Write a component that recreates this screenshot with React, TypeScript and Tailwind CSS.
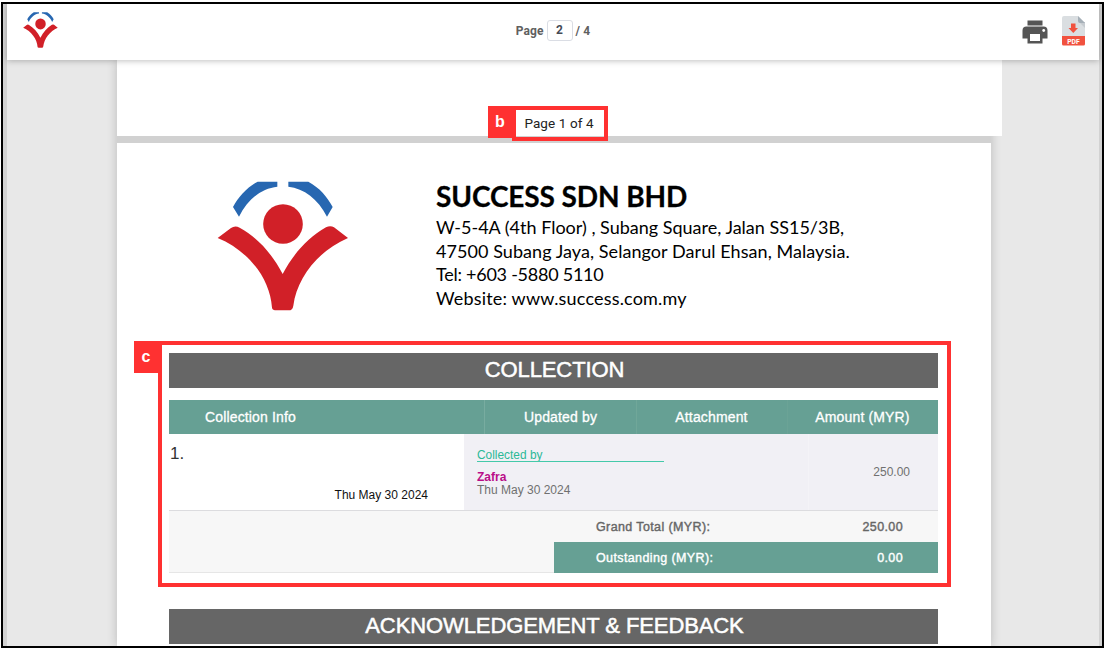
import React from "react";

function Logo({ className }: { className: string }) {
  return (
    <svg className={className} viewBox="51 48 396 390" preserveAspectRatio="none" aria-hidden="true">
      <path
        fill="#2767b1"
        d="M173 50H232V65C185 70 143 102 117 155L99 126C115 97 140 68 173 50ZM265 50H325C359 68 383 97 398 126L381 155C354 102 312 70 265 65Z"
      />
      <circle cx="249" cy="177" r="59.5" fill="#d12028" />
      <path
        fill="#d12028"
        d="M53 219L93 189Q105 180 119 188C173 218 216 266 248 327C280 266 324 218 378 187Q391 180 402 187L444 219C354 257 291 339 280 422Q278 436 266 436H230Q217 436 216 428C210 340 145 257 53 219Z"
      />
    </svg>
  );
}

function PrintIcon() {
  return (
    <svg className="h-6 w-[26px]" viewBox="0 0 26 24" aria-hidden="true">
      <path fill="#555" d="M5.5 0.5h15v5h-15zM4.5 6.5h17Q25.5 6.500 25.500 10.500V18.500H20.500V23.500H5.500V18.500H.5V10.500Q.5 6.500 4.500 6.500Z" />
      <path fill="#fff" d="M8 14h10v7H8z" />
      <circle cx="21.700" cy="10.500" r="1.400" fill="#fff" />
    </svg>
  );
}

function PdfIcon() {
  return (
    <svg className="h-[30px] w-[23px]" viewBox="0 0 23 30" aria-hidden="true">
      <path fill="#dadee1" d="M2 0h14l7 7v14H0V2Q0 0 2 0Z" />
      <path fill="#c6cbd0" d="M17 6h6v6z" />
      <path fill="#a5afb7" d="M16 0l7 7h-5q-2 0-2-2z" />
      <path fill="#f1523f" d="M9 7.500h4.500v4.500h2.500L11.300 17 6.500 12H9zM0 20h23v8q0 1.500-1.500 1.500h-20Q0 29.500 0 28z" />
      <text x="11.500" y="27.500" textAnchor="middle" fill="#fff" fontSize="7.500" fontWeight="700" fontFamily="Roboto, sans-serif" textLength="12.500" lengthAdjust="spacingAndGlyphs">
        PDF
      </text>
    </svg>
  );
}

function SectionTitle({ children }: { children: React.ReactNode }) {
  return (
    <h2 className="flex h-[35px] items-center justify-center bg-[#666] pb-[2px] pl-[2px] text-[22px] tracking-[-0.1px] text-white [-webkit-text-stroke:0.5px_white]">
      {children}
    </h2>
  );
}

function Toolbar() {
  return (
    <header className="relative z-10 flex h-[56px] items-start justify-between bg-white pr-[14px] pl-[16px] shadow-[0_1px_6px_rgba(0,0,0,0.25)]">
      <Logo className="mt-[8px] h-[36px] w-[35px]" />
      <div className="mt-[16px] ml-[26px] flex h-[21px] items-center font-[Roboto,sans-serif] text-[12px] font-bold tracking-[0.1px] text-[#606060]">
        <span>Page</span>
        <span className="mx-[3px] flex h-[21px] w-[26px] items-center justify-center rounded-[3px] border border-[#dadde4] pb-px text-[#454b55]">2</span>
        <span>/ 4</span>
      </div>
      <div className="mt-[12px] flex gap-[14px]">
        <div className="pt-[4px]"><PrintIcon /></div>
        <PdfIcon />
      </div>
    </header>
  );
}

function CollectionTable() {
  return (
    <div className="mt-[12px]">
      <div className="grid h-[34px] grid-cols-[315px_152px_151px_151px] bg-[#66a094] text-center text-[14px] leading-[34px] tracking-[0.15px] text-white [-webkit-text-stroke:0.3px_white]">
        <div className="pl-[36px] text-left">Collection Info</div>
        <div className="border-l border-[#78aca0]">Updated by</div>
        <div className="border-l border-[#70a799] pr-px">Attachment</div>
        <div className="border-l border-[#6ba396] pr-px">Amount (MYR)</div>
      </div>
      <div className="flex h-[77px] border-b border-[#dcdcdf] text-[12px]">
        <div className="flex w-[295px] flex-col justify-between pb-[7px] text-[#111]">
          <span className="pt-[9px] pl-px text-[17px] leading-[22px] text-[#333]">1.</span>
          <span className="pr-[36px] text-right leading-[15px]">Thu May 30 2024</span>
        </div>
        <div className="flex flex-1 bg-[#f1f0f5] text-[#707070]">
          <div className="flex w-[344px] flex-col items-start pt-[14px] pl-[13px] leading-[13px]">
            <div className="h-[13px] text-[11.900px] leading-[15px] text-[#2cb997]">Collected by</div>
            <div className="h-px w-[187px] bg-[#44c9a9]" />
            <div className="mt-[9px] font-bold text-[#b90e88]">Zafra</div>
            <div>Thu May 30 2024</div>
          </div>
          <div className="flex-1 border-l border-[#f4f3f7] pt-[31px] pr-[28px] text-right leading-[14px]">250.00</div>
        </div>
      </div>
      <div className="flex h-[62px] border-b border-[#e6e6e6] bg-[#f7f7f7] text-[12.5px] tracking-[0.38px]">
        <div className="w-[385px]" />
        <div className="flex-1">
          <div className="flex h-[31px] items-center justify-between pt-px pr-[35px] pl-[42px] text-[#666] [-webkit-text-stroke:0.4px_#666]">
            <span>Grand Total (MYR):</span>
            <span>250.00</span>
          </div>
          <div className="flex h-[31px] items-center justify-between bg-[#66a094] pt-px pr-[35px] pl-[42px] text-white [-webkit-text-stroke:0.4px_white]">
            <span>Outstanding (MYR):</span>
            <span>0.00</span>
          </div>
        </div>
      </div>
    </div>
  );
}

export default function App() {
  return (
    <div className="relative h-[650px] w-[1106px] overflow-hidden bg-white pt-[2px] pl-px font-['Liberation_Sans',Arial,sans-serif]">
      <div className="h-[646px] w-[1103px] overflow-hidden border-2 border-black bg-[#d2d2d2] pr-[3px] pl-[4px]">
        <Toolbar />
        <main className="h-[586px] overflow-hidden bg-[#e8e8e8] pl-[110px]">
          <div className="w-[874px] shadow-[0_0_10px_rgba(0,0,0,0.2)]">
            <div className="relative z-[1] flex h-[76px] w-[885px] items-end justify-center bg-white pr-px pb-[5px] font-[Roboto,sans-serif] text-[13.500px] leading-[16px] tracking-[0.1px] text-[#222]">
              Page 1 of 4
            </div>
            <div className="h-[7px] bg-[#d1d1d1]" />
            <div className="h-[503px] bg-white pr-[53px] pl-[52px]">
              <div className="flex h-[210px] pt-[38px] pl-[48px]">
                <Logo className="h-[130px] w-[132px]" />
                <div className="ml-[87px] font-[Lato,sans-serif] text-black">
                  <h1 className="h-[35px] text-[28px] leading-[31px] font-bold tracking-[-0.1px] whitespace-nowrap [-webkit-text-stroke:0.3px_black]">SUCCESS SDN BHD</h1>
                  <div className="text-[18px] leading-[23.700px] whitespace-nowrap">
                    <p>W-5-4A (4th Floor) , Subang Square, Jalan SS15/3B,</p>
                    <p className="tracking-[0.06px]">47500 Subang Jaya, Selangor Darul Ehsan, Malaysia.</p>
                    <p className="tracking-[-0.25px]">Tel: +603 -5880 5110</p>
                    <p className="tracking-[0.18px]">Website: www.success.com.my</p>
                  </div>
                </div>
              </div>
              <SectionTitle>COLLECTION</SectionTitle>
              <CollectionTable />
              <div className="mt-[36px]"><SectionTitle>ACKNOWLEDGEMENT &amp; FEEDBACK</SectionTitle></div>
            </div>
          </div>
        </main>
      </div>
      <div className="absolute top-[106px] left-[488px] z-20 flex h-[32px] w-[24px] items-center justify-center bg-[#ff3131] text-[16px] font-bold text-white">b</div>
      <div className="absolute top-[106px] left-[512px] z-20 h-[35px] w-[96px] border-4 border-[#ff3131]" />
      <div className="absolute top-[341px] left-[134px] z-20 flex h-[32px] w-[24px] items-center justify-center bg-[#ff3131] text-[16px] font-bold text-white">c</div>
      <div className="absolute top-[341px] left-[158px] z-20 h-[246px] w-[793px] border-4 border-[#ff3131]" />
    </div>
  );
}
